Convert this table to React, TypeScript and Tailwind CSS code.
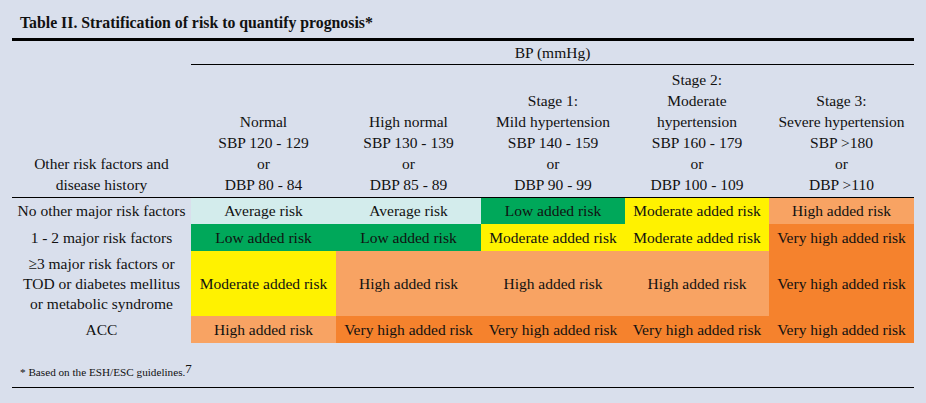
const header = [
  ["Normal", "SBP 120 - 129", "or", "DBP 80 - 84"],
  ["High normal", "SBP 130 - 139", "or", "DBP 85 - 89"],
  ["Stage 1:", "Mild hypertension", "SBP 140 - 159", "or", "DBP 90 - 99"],
  ["Stage 2:", "Moderate", "hypertension", "SBP 160 - 179", "or", "DBP 100 - 109"],
  ["Stage 3:", "Severe hypertension", "SBP >180", "or", "DBP >110"],
];

const colors = {
  avg: "bg-[#d3ecec]",
  low: "bg-[#00a85a]",
  mod: "bg-[#fff200]",
  high: "bg-[#f8a363]",
  vhigh: "bg-[#f5822d]",
};

const labels = {
  avg: "Average risk",
  low: "Low added risk",
  mod: "Moderate added risk",
  high: "High added risk",
  vhigh: "Very high added risk",
};

type Level = keyof typeof colors;

const rows: { label: string[]; height: string; cells: Level[] }[] = [
  { label: ["No other major risk factors"], height: "h-[26px]", cells: ["avg", "avg", "low", "mod", "high"] },
  { label: ["1 - 2 major risk factors"], height: "h-[27px]", cells: ["low", "low", "mod", "mod", "vhigh"] },
  {
    label: ["≥3 major risk factors or", "TOD or diabetes mellitus", "or metabolic syndrome"],
    height: "h-[65px]",
    cells: ["mod", "high", "high", "high", "vhigh"],
  },
  { label: ["ACC"], height: "h-[27px]", cells: ["high", "vhigh", "vhigh", "vhigh", "vhigh"] },
];

const cols = "grid grid-cols-[179px_145px_145px_144px_144px_145px]";

export default function App() {
  return (
    <div
      className="w-[926px] h-[403px] bg-[#d9dfec] text-[#111] pt-[12px]"
      style={{ fontFamily: '"Liberation Serif", serif' }}
    >
      <div className="mx-[12px] w-[902px]">
        {/* Title */}
        <div className="border-b-[3px] border-black pl-[8px] pt-[1px] h-[29px]">
          <h1 className="text-[15.8px] font-bold leading-[20px]">
            Table II. Stratification of risk to quantify prognosis*
          </h1>
        </div>

        {/* BP heading */}
        <div className={cols}>
          <div />
          <div className="col-span-5 h-[24px] border-b border-black flex items-center justify-center text-[15.5px] pt-[1px]">
            BP (mmHg)
          </div>
        </div>

        {/* Column headings */}
        <div className={`${cols} border-b border-black pb-[2px] pt-[4px] text-[15.5px] leading-[21px]`}>
          <div className="flex flex-col justify-end items-center">
            <span>Other risk factors and</span>
            <span>disease history</span>
          </div>
          {header.map((lines, i) => (
            <div key={i} className="flex flex-col justify-end items-center">
              {lines.map((l) => (
                <span key={l}>{l}</span>
              ))}
            </div>
          ))}
        </div>

        {/* Body */}
        {rows.map((row, r) => (
          <div key={r} className={`${cols} ${row.height} text-[15.5px]`}>
            <div className="flex flex-col items-center justify-center leading-[20px]">
              {row.label.map((l) => (
                <span key={l}>{l}</span>
              ))}
            </div>
            {row.cells.map((c, i) => (
              <div key={i} className={`${colors[c]} flex items-center justify-center whitespace-nowrap`}>
                {labels[c]}
              </div>
            ))}
          </div>
        ))}

        {/* Footnote */}
        <div className="h-[45px] border-b border-black flex items-end pl-[8px] pb-[6px] text-[11.2px]">
          <span>
            * Based on the ESH/ESC guidelines.<sup className="text-[13px] relative -top-[3px]">7</sup>
          </span>
        </div>
      </div>
    </div>
  );
}
